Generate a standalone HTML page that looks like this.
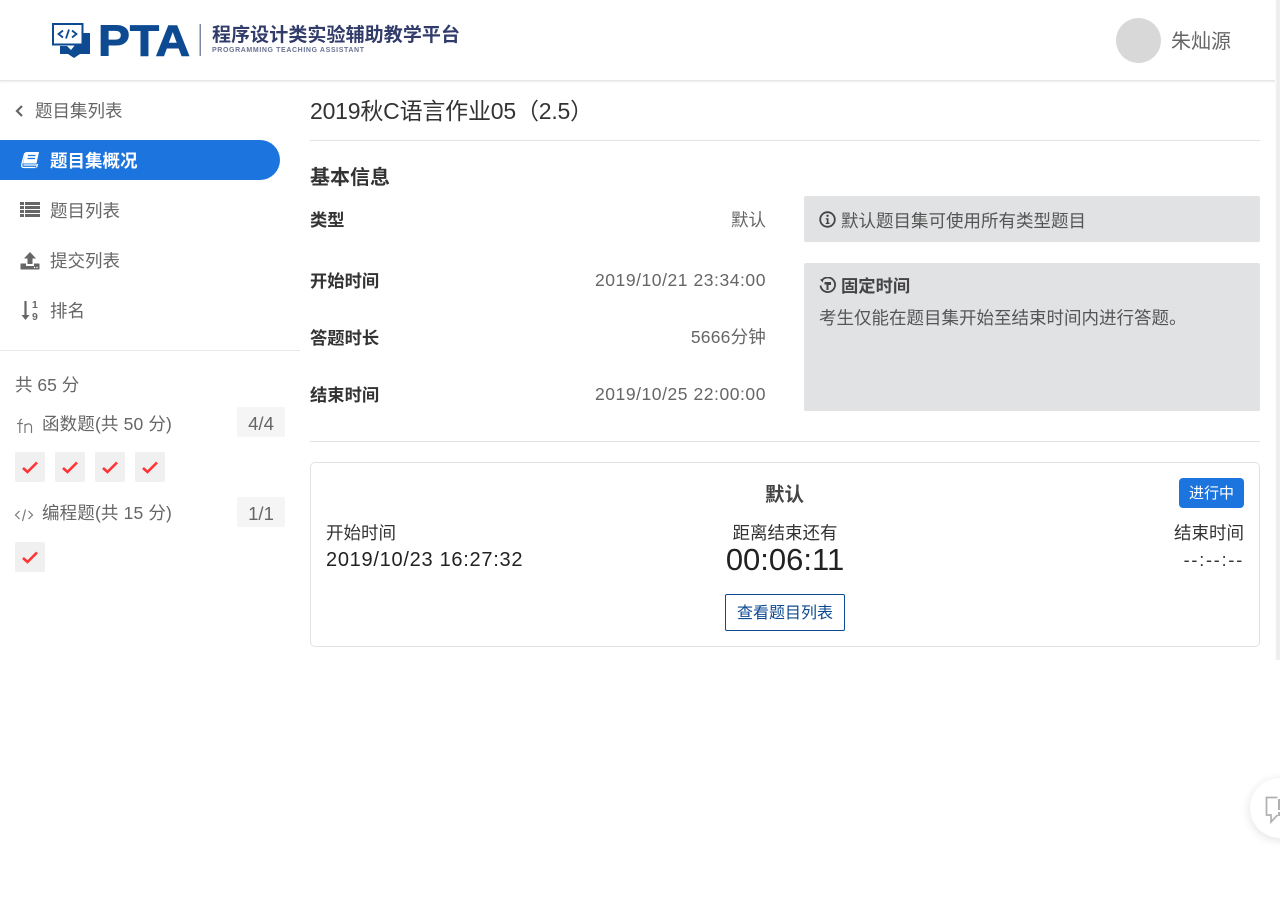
<!DOCTYPE html>
<html lang="zh"><head><meta charset="utf-8"><title>PTA</title>
<style>
*{box-sizing:border-box}
html,body{margin:0;padding:0;background:#fff;width:1280px;height:909px;overflow:hidden}
body{position:relative;font-family:"Liberation Sans","Noto Sans CJK SC",sans-serif;font-size:17.5px;color:#666}
.t{position:absolute;white-space:nowrap;line-height:24px;height:24px}
.r{text-align:right}
.b{font-weight:700;color:#333}
.d{letter-spacing:.55px}
.abs{position:absolute}
.tile{position:absolute;width:30px;height:30px;background:#f0f0f0;border-radius:2px}
.tile svg{position:absolute;left:6px;top:7px}
.badge{position:absolute;left:237px;width:48px;height:30px;background:#f5f5f5;border-radius:2px;text-align:center;line-height:33px;color:#666;font-size:18.500px}
</style></head><body>

<!-- header -->
<div class="abs" style="left:0;top:0;width:1280px;height:81px;background:#fff;border-bottom:1px solid #e6e6e6;box-shadow:0 1px 2px rgba(0,0,0,.08)"></div>
<svg class="abs" style="left:40px;top:10px" width="430" height="60" viewBox="0 0 430 60">
  <path d="M43 23 H50 V44 H40 L34 48 L28 44 H20 V36 H27 L31 40 L35 35 H43 Z" fill="#0d4a92"/>
  <rect x="13" y="14" width="29.500" height="20.500" fill="#fff" stroke="#0d4a92" stroke-width="2"/>
  <path d="M23 20.500 L18.500 24 L23 27.500 M32 20.500 L36.500 24 L32 27.500 M29 19.500 L26 28.500" fill="none" stroke="#0d4a92" stroke-width="1.800"/>
  <text x="58" y="45.500" font-family="Liberation Sans" font-weight="700" font-size="44" fill="#0d4a92" stroke="#0d4a92" stroke-width="1" textLength="92" lengthAdjust="spacingAndGlyphs">PTA</text>
  <rect x="159.500" y="14" width="1.500" height="32" fill="#7e88a6"/>
  <text x="172" y="31" font-family="Liberation Sans,Noto Sans CJK SC,sans-serif" font-weight="700" font-size="19" fill="#313c6b" textLength="248">程序设计类实验辅助教学平台</text>
  <text x="172" y="42" font-family="Liberation Sans" font-weight="700" font-size="7" fill="#6a7392" textLength="152" lengthAdjust="spacing">PROGRAMMING TEACHING ASSISTANT</text>
</svg>
<div class="abs" style="left:1116px;top:18px;width:45px;height:45px;border-radius:50%;background:#d8d8d8"></div>
<div class="t" style="left:1171px;top:30px;font-size:20px">朱灿源</div>
<div class="abs" style="left:1275px;top:0;width:5px;height:660px;background:linear-gradient(90deg,#fff,#ebebeb 45%,#f1f1f1)"></div>

<!-- sidebar -->
<svg class="abs" style="left:15px;top:104px" width="10" height="14" viewBox="0 0 10 14"><path d="M7 2 L2 7 L7 12" fill="none" stroke="#666" stroke-width="2.200"/></svg>
<div class="t" style="left:35px;top:99px">题目集列表</div>

<div class="abs" style="left:0;top:140px;width:280px;height:40px;background:#1c75de;border-radius:0 20px 20px 0"></div>
<svg class="abs" style="left:20px;top:151px" width="20" height="18" viewBox="0 0 20 18"><path d="M5.500 1 H19 L16.500 12.500 H3 Z" fill="#fff"/><path d="M8 4.500 H15.500 M7.500 7.500 H15" stroke="#1c75de" stroke-width="1.200"/><path d="M4.800 2 L2 12.500 Q.8 16.500 4 16.500 H15.500 M3.500 14 H16.500" fill="none" stroke="#fff" stroke-width="1.300"/><path d="M17.500 13 L16.500 16.500" stroke="#fff" stroke-width="1.300"/></svg>
<div class="t" style="left:50px;top:149px;color:#fff;font-weight:700">题目集概况</div>

<svg class="abs" style="left:20px;top:201px" width="20" height="17" viewBox="0 0 20 17" fill="#666"><rect x="0" y="1" width="4" height="3"/><rect x="5" y="1" width="15" height="3"/><rect x="0" y="5" width="4" height="3"/><rect x="5" y="5" width="15" height="3"/><rect x="0" y="9" width="4" height="3"/><rect x="5" y="9" width="15" height="3"/><rect x="0" y="13" width="4" height="3"/><rect x="5" y="13" width="15" height="3"/></svg>
<div class="t" style="left:50px;top:199px">题目列表</div>

<svg class="abs" style="left:20px;top:251px" width="20" height="19" viewBox="0 0 20 19" fill="#666"><path d="M10 1 L16 7.500 H12.500 V13 H7.500 V7.500 H4 Z"/><path d="M1 12.500 H6 V15 H14 V12.500 H19 Q19.500 12.500 19.500 13 V18 Q19.500 18.500 19 18.500 H1 Q.5 18.500 .5 18 V13 Q.5 12.500 1 12.500 Z"/><circle cx="14.500" cy="16.500" r=".7" fill="#fff"/><circle cx="17" cy="16.500" r=".7" fill="#fff"/></svg>
<div class="t" style="left:50px;top:249px">提交列表</div>

<svg class="abs" style="left:21px;top:300px" width="20" height="21" viewBox="0 0 20 21"><path d="M4.500 1 V18" stroke="#666" stroke-width="2.200" fill="none"/><path d="M.5 15 L4.500 20 L8.500 15 Z" fill="#666"/><text x="11" y="8" font-family="Liberation Sans" font-weight="700" font-size="10.500" fill="#666">1</text><text x="11" y="20" font-family="Liberation Sans" font-weight="700" font-size="10.500" fill="#666">9</text></svg>
<div class="t" style="left:50px;top:299px">排名</div>

<div class="abs" style="left:0;top:350px;width:300px;height:1px;background:#e8e8e8"></div>

<div class="t" style="left:15px;top:373px">共 65 分</div>
<svg class="abs" style="left:15px;top:416px" width="20" height="20" viewBox="0 0 20 20"><path d="M7 3.500 Q5 3 4.800 6 V17 M2 7.500 H8 M10 17 V8 M10 9.500 Q12 7.500 14.500 8 Q16.500 8.500 16.500 11 V17" fill="none" stroke="#777" stroke-width="1.200"/></svg>
<div class="t" style="left:42px;top:412px;letter-spacing:.15px">函数题(共 50 分)</div>
<div class="badge" style="top:407px">4/4</div>
<div class="tile" style="left:15px;top:452px"><svg width="18" height="16" viewBox="0 0 18 16"><path d="M2 9 L6.500 13 L16 3.500" fill="none" stroke="#f33" stroke-width="2.600"/></svg></div>
<div class="tile" style="left:55px;top:452px"><svg width="18" height="16" viewBox="0 0 18 16"><path d="M2 9 L6.500 13 L16 3.500" fill="none" stroke="#f33" stroke-width="2.600"/></svg></div>
<div class="tile" style="left:95px;top:452px"><svg width="18" height="16" viewBox="0 0 18 16"><path d="M2 9 L6.500 13 L16 3.500" fill="none" stroke="#f33" stroke-width="2.600"/></svg></div>
<div class="tile" style="left:135px;top:452px"><svg width="18" height="16" viewBox="0 0 18 16"><path d="M2 9 L6.500 13 L16 3.500" fill="none" stroke="#f33" stroke-width="2.600"/></svg></div>
<svg class="abs" style="left:14px;top:506px" width="20" height="18" viewBox="0 0 20 18"><path d="M5.500 5 L1.500 9 L5.500 13 M14.500 5 L18.500 9 L14.500 13 M11.500 3.500 L8.500 15" fill="none" stroke="#777" stroke-width="1.200"/></svg>
<div class="t" style="left:42px;top:501px;letter-spacing:.15px">编程题(共 15 分)</div>
<div class="badge" style="top:497px">1/1</div>
<div class="tile" style="left:15px;top:542px"><svg width="18" height="16" viewBox="0 0 18 16"><path d="M2 9 L6.500 13 L16 3.500" fill="none" stroke="#f33" stroke-width="2.600"/></svg></div>

<!-- main -->
<div class="t" style="left:310px;top:99px;font-size:23px;color:#333;letter-spacing:-.2px">2019秋C语言作业05（2.5）</div>
<div class="abs" style="left:310px;top:140px;width:950px;height:1px;background:#e2e2e2"></div>
<div class="t b" style="left:310px;top:166px;font-size:20px">基本信息</div>

<div class="t b" style="left:310px;top:208px;font-size:17.300px">类型</div>
<div class="t r" style="right:514px;top:208px">默认</div>
<div class="t b" style="left:310px;top:269px;font-size:17.300px">开始时间</div>
<div class="t r d" style="right:514px;top:268px">2019/10/21 23:34:00</div>
<div class="t b" style="left:310px;top:326px;font-size:17.300px">答题时长</div>
<div class="t r" style="right:514px;top:325px;letter-spacing:.2px">5666分钟</div>
<div class="t b" style="left:310px;top:383px;font-size:17.300px">结束时间</div>
<div class="t r d" style="right:514px;top:382px">2019/10/25 22:00:00</div>

<div class="abs" style="left:804px;top:196px;width:456px;height:46px;background:#e1e2e4;border-radius:2px"></div>
<svg class="abs" style="left:819px;top:211px" width="17" height="17" viewBox="0 0 17 17"><circle cx="8.500" cy="8.500" r="7.300" fill="none" stroke="#444" stroke-width="1.800"/><circle cx="8.500" cy="4.800" r="1.200" fill="#444"/><path d="M6.800 7.300 H9.500 V11.800 H10.500 V13 H6.800 V11.800 H7.800 V8.500 H6.800 Z" fill="#444"/></svg>
<div class="t" style="left:841px;top:209px;color:#555">默认题目集可使用所有类型题目</div>

<div class="abs" style="left:804px;top:263px;width:456px;height:148px;background:#e1e2e4;border-radius:2px"></div>
<svg class="abs" style="left:819px;top:277px" width="17" height="17" viewBox="0 0 17 17"><path d="M2.500 4 A7.300 7.300 0 1 1 1.500 8.500" fill="none" stroke="#444" stroke-width="1.800"/><path d="M1 2.500 L4.500 2 L3.800 5.500 Z" fill="#444"/><path d="M5.500 5 H12 V8 H9.500 V13 H7.500 V7.500 H5.500 Z" fill="#444"/></svg>
<div class="t" style="left:841px;top:274px;font-weight:700;color:#444;font-size:17.300px">固定时间</div>
<div class="t" style="left:819px;top:306px;color:#555">考生仅能在题目集开始至结束时间内进行答题。</div>

<div class="abs" style="left:310px;top:441px;width:950px;height:1px;background:#e2e2e2"></div>

<div class="abs" style="left:310px;top:462px;width:950px;height:185px;border:1px solid #e2e2e2;border-radius:5px"></div>
<div class="t" style="left:765px;top:483px;font-weight:700;font-size:19.500px;color:#444">默认</div>
<div class="abs" style="left:1179px;top:478px;width:65px;height:30px;background:#1c75de;border-radius:4px;color:#fff;font-size:15px;line-height:31px;text-align:center">进行中</div>
<div class="t" style="left:326px;top:521px;color:#333">开始时间</div>
<div class="t" style="left:326px;top:548px;color:#222;font-size:20px;letter-spacing:.72px">2019/10/23 16:27:32</div>
<div class="t" style="left:685px;width:200px;text-align:center;top:521px;color:#333">距离结束还有</div>
<div class="t" style="left:685px;width:200px;text-align:center;top:548px;height:24px;color:#222;font-size:31px">00:06:11</div>
<div class="t r" style="right:36px;top:521px;color:#333">结束时间</div>
<div class="t r" style="right:36px;top:548px;color:#333;font-size:18px;letter-spacing:1.800px">--:--:--</div>
<div class="abs" style="left:725px;top:594px;width:120px;height:37px;border:1px solid #0d4a92;border-radius:2px;color:#0d4a92;font-size:16px;line-height:38px;text-align:center">查看题目列表</div>

<!-- feedback -->
<div class="abs" style="left:1250px;top:778px;width:60px;height:60px;border-radius:50%;background:#fff;box-shadow:0 2px 10px rgba(0,0,0,.12)"></div>
<svg class="abs" style="left:1264px;top:795px" width="16" height="30" viewBox="0 0 16 30"><path d="M13.500 2.500 H2.500 V20 H7 V27 L13.500 20" fill="none" stroke="#b0b0b0" stroke-width="1.700"/><rect x="14" y="4" width="2" height="11" fill="#b0b0b0"/><rect x="14" y="17" width="2" height="4" fill="#b0b0b0"/></svg>

</body></html>
